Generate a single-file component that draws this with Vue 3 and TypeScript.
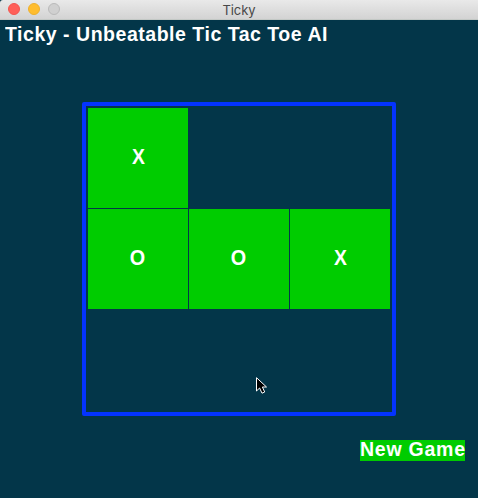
<script setup lang="ts">
type Mark = 'X' | 'O' | ''

const cells: Mark[] = ['X', '', '', 'O', 'O', 'X', '', '', '']
</script>

<template>
  <main class="window">
    <header class="titlebar">
      <div class="controls">
        <span class="dot close"></span>
        <span class="dot minimize"></span>
        <span class="dot zoom"></span>
      </div>
      <span class="title">Ticky</span>
    </header>
    <h1 class="heading">Ticky - Unbeatable Tic Tac Toe AI</h1>
    <section class="board">
      <div v-for="(mark, i) in cells" :key="i" class="cell" :class="{ filled: mark }">
        <span class="mark" :class="{ cross: mark === 'X' }">{{ mark }}</span>
      </div>
    </section>
    <button class="new-game"><span class="label">New Game</span></button>
    <svg class="cursor" width="14" height="20" viewBox="0 0 14 20">
      <path d="M.5 .7V14L3.6 11L6 16.2L8.7 15L6.4 10H10.5Z" fill="#000" stroke="#fff" stroke-width="1" />
    </svg>
  </main>
</template>

<style>
body {
  margin: 0;
  background: #033649;
}
</style>

<style scoped>
.window {
  position: relative;
  display: flex;
  flex-direction: column;
  width: 478px;
  height: 498px;
  overflow: hidden;
  background: #033649;
  color: #fff;
  font-family: "Liberation Sans", Arial, sans-serif;
}
.titlebar {
  display: grid;
  grid-template-columns: 1fr auto 1fr;
  align-items: center;
  box-sizing: border-box;
  height: 20px;
  padding: 0 8px;
  border-bottom: 1px solid #c3c8c5;
  border-top-left-radius: 3px;
  background: linear-gradient(#e9e9e9, #d3d3d3);
}
.controls {
  display: flex;
  gap: 8px;
  margin-top: -1px;
}
.dot {
  box-sizing: border-box;
  width: 12px;
  height: 12px;
  border: 1px solid;
  border-radius: 50%;
}
.close {
  border-color: #f3554e;
  background: #ff5f58;
}
.minimize {
  border-color: #eeb02c;
  background: #ffbd2e;
}
.zoom {
  border-color: #bababa;
  background: #d0d0d0;
}
.title {
  color: #484848;
  font-family: "Inter", "Roboto", sans-serif;
  font-size: 13px;
  line-height: 18px;
  letter-spacing: -0.1px;
}
.heading {
  align-self: flex-start;
  height: 24px;
  margin: 2px 0 0 5px;
  font-size: 21px;
  line-height: 24px;
  font-weight: 700;
  letter-spacing: 0.55px;
  white-space: nowrap;
  transform: scaleX(0.93);
  transform-origin: left center;
}
.board {
  display: grid;
  grid-template-columns: repeat(3, 100px);
  grid-template-rows: repeat(3, 100px);
  gap: 1px;
  align-self: flex-start;
  margin: 56px 0 0 82px;
  padding: 2px;
  border: 4px solid #0433ff;
  border-radius: 2px;
}
.cell {
  display: flex;
  align-items: center;
  justify-content: center;
  box-sizing: border-box;
  padding-bottom: 2px;
  font-size: 22px;
  line-height: 24px;
  font-weight: 700;
}
.mark {
  transform: scaleX(0.9);
}
.cross {
  transform: scaleX(0.88);
}
.filled {
  background: #00cc00;
}
.new-game {
  display: flex;
  align-self: flex-end;
  width: 105px;
  height: 21px;
  margin: 24px 13px 0 0;
  padding: 0;
  border: 0;
  background: #00cc00;
  color: #fff;
  font: 700 21px/19px "Liberation Sans", Arial, sans-serif;
  letter-spacing: 0.8px;
  white-space: nowrap;
}
.label {
  margin-top: -1px;
  transform: scaleX(0.93);
  transform-origin: left center;
}
.cursor {
  position: absolute;
  left: 256px;
  top: 377px;
}
</style>
